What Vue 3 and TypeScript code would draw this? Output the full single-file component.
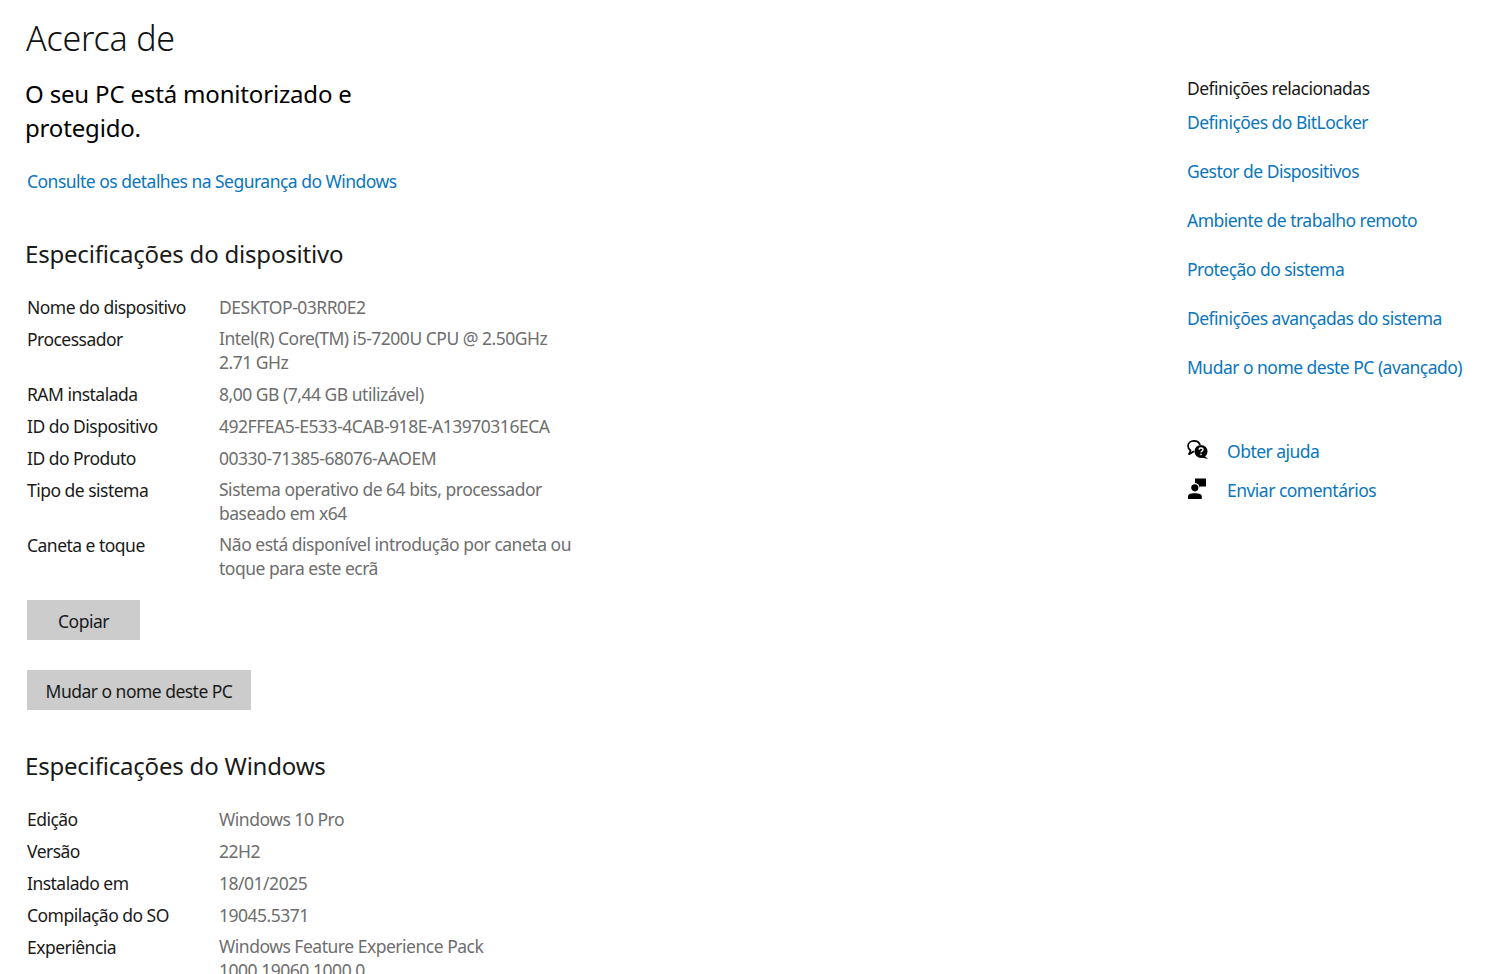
<script setup lang="ts">
interface Spec { label: string; lines: string[] }
const device: Spec[] = [
  { label: 'Nome do dispositivo', lines: ['DESKTOP-03RR0E2'] },
  { label: 'Processador', lines: ['Intel(R) Core(TM) i5-7200U CPU @ 2.50GHz', '2.71 GHz'] },
  { label: 'RAM instalada', lines: ['8,00 GB (7,44 GB utilizável)'] },
  { label: 'ID do Dispositivo', lines: ['492FFEA5-E533-4CAB-918E-A13970316ECA'] },
  { label: 'ID do Produto', lines: ['00330-71385-68076-AAOEM'] },
  { label: 'Tipo de sistema', lines: ['Sistema operativo de 64 bits, processador', 'baseado em x64'] },
  { label: 'Caneta e toque', lines: ['Não está disponível introdução por caneta ou', 'toque para este ecrã'] },
]
const windows: Spec[] = [
  { label: 'Edição', lines: ['Windows 10 Pro'] },
  { label: 'Versão', lines: ['22H2'] },
  { label: 'Instalado em', lines: ['18/01/2025'] },
  { label: 'Compilação do SO', lines: ['19045.5371'] },
  { label: 'Experiência', lines: ['Windows Feature Experience Pack', '1000.19060.1000.0'] },
]
const related: string[] = [
  'Definições do BitLocker',
  'Gestor de Dispositivos',
  'Ambiente de trabalho remoto',
  'Proteção do sistema',
  'Definições avançadas do sistema',
  'Mudar o nome deste PC (avançado)',
]
</script>

<template>
  <div class="page">
    <main class="main">
      <h1 class="title">Acerca de</h1>
      <p class="status">O seu PC está monitorizado e<br />protegido.</p>
      <a class="link details">Consulte os detalhes na Segurança do Windows</a>

      <h2 class="section first">Especificações do dispositivo</h2>
      <dl class="specs">
        <div v-for="s in device" :key="s.label" class="row">
          <dt class="label">{{ s.label }}</dt>
          <dd class="value" :class="{ multi: s.lines.length > 1 }"><span v-for="l in s.lines" :key="l" class="line">{{ l }}</span></dd>
        </div>
      </dl>
      <button class="btn copy">Copiar</button>
      <button class="btn rename">Mudar o nome deste PC</button>

      <h2 class="section second">Especificações do Windows</h2>
      <dl class="specs">
        <div v-for="s in windows" :key="s.label" class="row">
          <dt class="label">{{ s.label }}</dt>
          <dd class="value" :class="{ multi: s.lines.length > 1 }"><span v-for="l in s.lines" :key="l" class="line">{{ l }}</span></dd>
        </div>
      </dl>
    </main>

    <aside class="side">
      <div class="side-title">Definições relacionadas</div>
      <nav class="related">
        <a v-for="r in related" :key="r" class="link">{{ r }}</a>
      </nav>
      <div class="help">
        <div class="help-row">
          <svg class="icon" viewBox="0 0 22 24" width="22" height="24">
            <path d="M7 1.800C3.600 1.800 1 4 1 7c0 1.900 1 3.500 2.600 4.500L2 15.200l4.600-2.600" fill="none" stroke="#000" stroke-width="1.700" stroke-linejoin="round" stroke-linecap="round" />
            <path d="M7 1.800c2.800 0 5 1.400 5.800 3.600" fill="none" stroke="#000" stroke-width="1.700" stroke-linecap="round" />
            <circle cx="14" cy="12.400" r="6.500" fill="#000" />
            <path d="M17.400 16.800l3.600 3.200-6.400-1.400z" fill="#000" />
            <path d="M12.100 10.800c0-1.100.8-1.800 1.900-1.800s2 .7 2 1.700c0 1.400-2 1.400-2 2.800" fill="none" stroke="#fff" stroke-width="1.300" />
            <rect x="13.300" y="14.700" width="1.400" height="1.500" fill="#fff" />
          </svg>
          <a class="link">Obter ajuda</a>
        </div>
        <div class="help-row">
          <svg class="icon" viewBox="0 0 22 24" width="22" height="24">
            <path d="M8 .5h11v8h-5.600l-2.200 2V6H8z" fill="#000" />
            <circle cx="7.800" cy="9.800" r="4.200" fill="#000" stroke="#fff" stroke-width="1.200" />
            <path d="M1 21v-2.400C1 16.200 3.400 15.200 7.800 15.200s7 1 7 3.400V21z" fill="#000" />
          </svg>
          <a class="link">Enviar comentários</a>
        </div>
      </div>
    </aside>
  </div>
</template>

<style>
html, body { margin: 0; background: #fff; overflow: hidden; }
</style>

<style scoped>
.page {
  display: flex;
  justify-content: space-between;
  height: 974px;
  overflow: hidden;
  background: #fff;
  font-family: "Noto Sans", "Open Sans", sans-serif;
  font-size: 17.5px;
  line-height: 24px;
  color: #1a1a1a;
  letter-spacing: -0.52px;
}
.main {
  width: 700px;
  padding-left: 27px;
  display: flex;
  flex-direction: column;
  align-items: flex-start;
}
.main > * { flex: none; }
.title {
  margin: 14px 0 0 -1px;
  font-size: 34px;
  font-weight: 300;
  line-height: 48px;
  letter-spacing: -0.2px;
  color: #111;
}
.status {
  margin: 15px 0 0 -2px;
  font-size: 24px;
  line-height: 34px;
  color: #000;
  letter-spacing: -0.17px;
}
.link {
  color: #0a76bd;
  text-decoration: none;
}
.details { margin-top: 24px; }
.section {
  margin: 0 0 0 -2px;
  font-size: 24px;
  font-weight: 400;
  line-height: 34px;
  letter-spacing: -0.2px;
  color: #1a1a1a;
}
.section.first { margin-top: 44px; }
.section.second { margin-top: 39px; }
.specs {
  margin: 24px 0 0;
  display: flex;
  flex-direction: column;
  gap: 8px;
}
.row {
  display: grid;
  grid-template-columns: 192px 400px;
}
.label { margin: 0; color: #1a1a1a; }
.value { margin: 0; color: #6e6e6e; letter-spacing: -0.49px; }
.value.multi { line-height: 23.5px; }
.line { display: block; white-space: nowrap; }
.btn {
  border: 0;
  height: 40px;
  padding: 2px 0 0;
  background: #ccc;
  color: #1a1a1a;
  font: inherit;
  letter-spacing: inherit;
  white-space: nowrap;
}
.copy { margin-top: 20px; width: 113px; }
.rename { margin-top: 30px; width: 224px; }
.side {
  width: 319px;
  padding-top: 76px;
  flex: none;
}
.side-title { color: #1a1a1a; }
.related {
  margin-top: 10px;
  display: flex;
  flex-direction: column;
  align-items: flex-start;
  gap: 25px;
}
.help {
  margin-top: 60px;
  display: flex;
  flex-direction: column;
  gap: 15px;
}
.help-row {
  display: flex;
  align-items: center;
  gap: 18px;
}
.icon { flex: none; }
</style>
